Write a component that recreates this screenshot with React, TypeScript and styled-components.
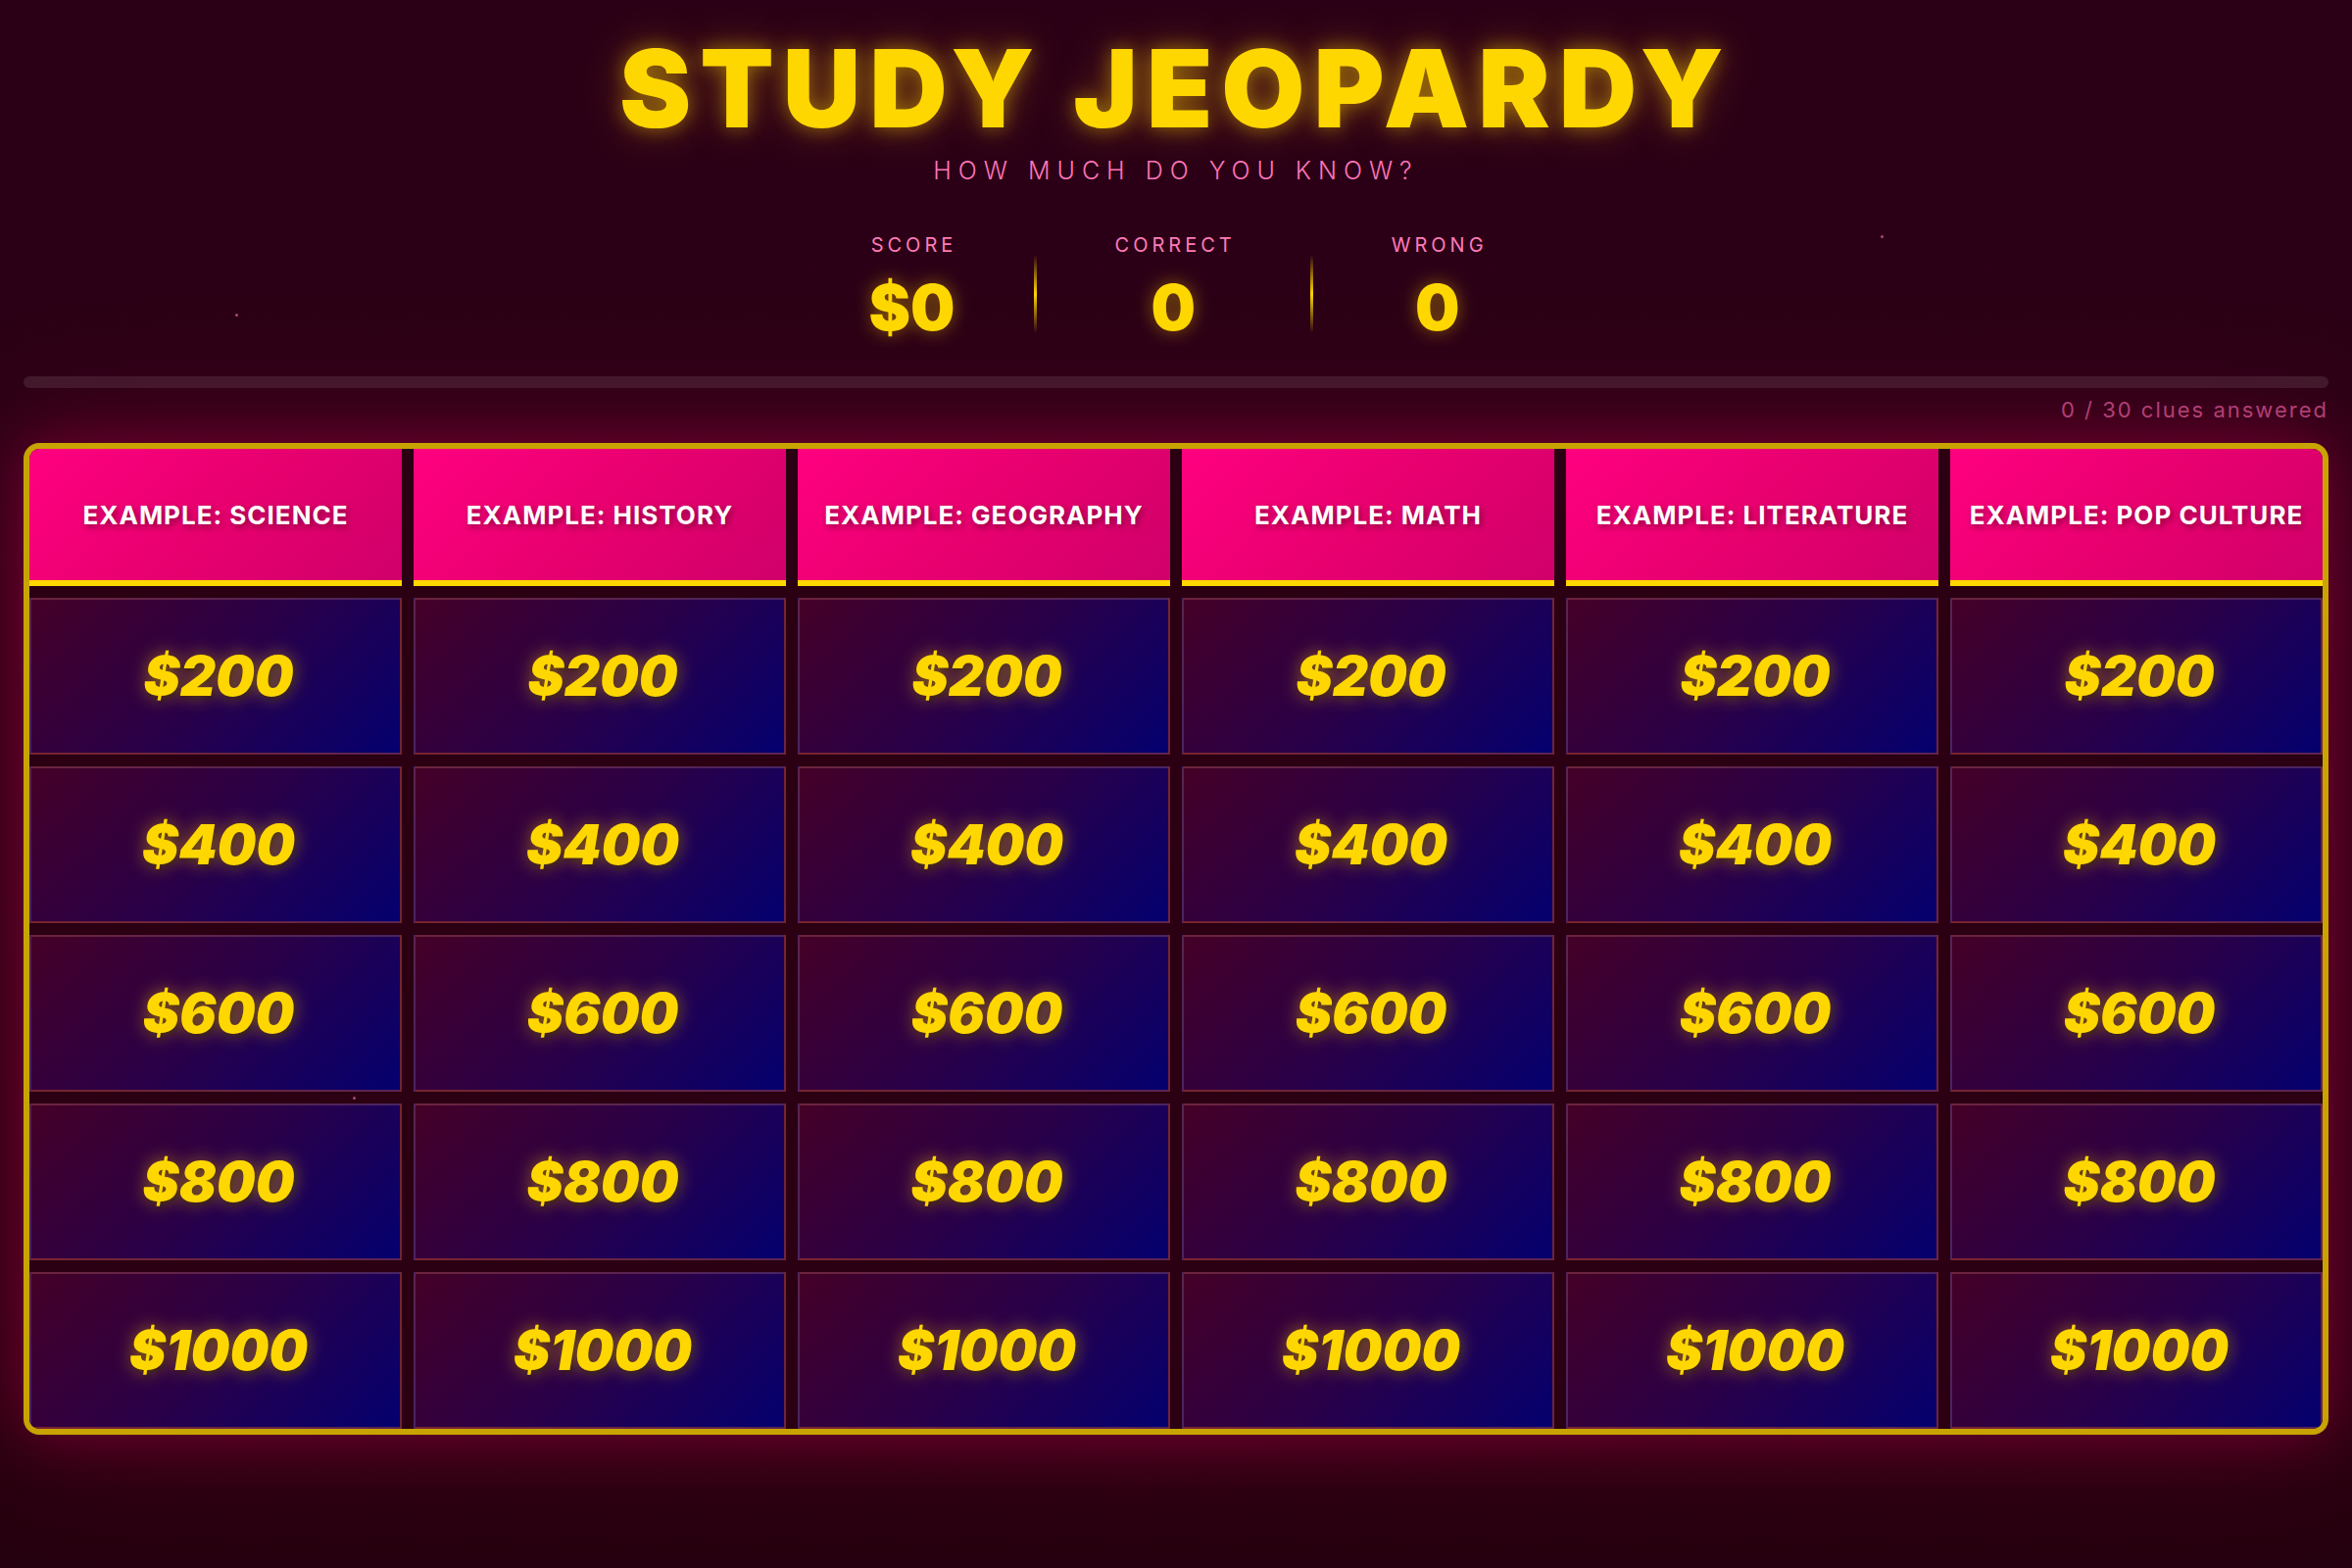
import styled, { createGlobalStyle } from 'styled-components';

const categories = [
  'Example: Science',
  'Example: History',
  'Example: Geography',
  'Example: Math',
  'Example: Literature',
  'Example: Pop Culture',
];

const values = [200, 400, 600, 800, 1000];

const sparks = [
  { x: 240, y: 320 },
  { x: 1919, y: 240 },
  { x: 360, y: 1119 },
];

const GlobalStyle = createGlobalStyle`
  * {
    box-sizing: border-box;
  }
  body {
    margin: 0;
    background: #2a0014;
    font-family: Inter, "Noto Sans", "Liberation Sans", sans-serif;
  }
`;

export default function App() {
  const answered = 0;
  const total = categories.length * values.length;

  return (
    <>
      <GlobalStyle />
      <Page>
        {sparks.map((s, i) => (
          <Spark key={i} style={{ left: s.x, top: s.y }} />
        ))}
        <Title>Study Jeopardy</Title>
        <Subtitle>How much do you know?</Subtitle>

        <Stats>
          <Stat>
            <StatLabel>Score</StatLabel>
            <StatValue>$0</StatValue>
          </Stat>
          <Divider />
          <Stat>
            <StatLabel>Correct</StatLabel>
            <StatValue>0</StatValue>
          </Stat>
          <Divider />
          <Stat>
            <StatLabel>Wrong</StatLabel>
            <StatValue>0</StatValue>
          </Stat>
        </Stats>

        <ProgressTrack>
          <ProgressFill style={{ width: `${(answered / total) * 100}%` }} />
        </ProgressTrack>
        <ProgressText>
          {answered} / {total} clues answered
        </ProgressText>

        <Board>
          {categories.map((c) => (
            <CategoryHeader key={c}>{c}</CategoryHeader>
          ))}
          {values.map((v) =>
            categories.map((c) => (
              <ClueCell key={c + v} type="button">
                ${v}
              </ClueCell>
            ))
          )}
        </Board>
      </Page>
    </>
  );
}

const Page = styled.div`
  position: relative;
  min-height: 100vh;
  padding: 35px 24px 60px;
  background:
    radial-gradient(ellipse 60% 45% at 50% 62%, rgba(120, 0, 45, 0.55), rgba(42, 0, 20, 0) 75%),
    linear-gradient(180deg, #2b0016 0%, #2c0016 40%, #26000f 100%);
`;

const Spark = styled.span`
  position: absolute;
  width: 3px;
  height: 3px;
  border-radius: 50%;
  background: rgba(255, 120, 190, 0.6);
`;

const Title = styled.h1`
  margin: 0;
  text-align: center;
  font-size: 110px;
  line-height: 1;
  font-weight: 900;
  letter-spacing: 9px;
  text-transform: uppercase;
  color: #ffd700;
  text-shadow:
    0 0 20px rgba(255, 215, 0, 0.45),
    0 0 45px rgba(255, 170, 0, 0.3);
`;

const Subtitle = styled.p`
  margin: 17px 0 0;
  text-align: center;
  font-size: 25px;
  line-height: 1;
  font-weight: 300;
  letter-spacing: 7px;
  text-transform: uppercase;
  color: #ff74b8;
`;

const Stats = styled.div`
  display: flex;
  justify-content: center;
  align-items: flex-start;
  gap: 80px;
  margin-top: 53px;
`;

const Stat = styled.div`
  display: flex;
  flex-direction: column;
  align-items: center;
  gap: 22px;
`;

const StatLabel = styled.span`
  font-size: 20px;
  line-height: 1;
  font-weight: 400;
  letter-spacing: 4px;
  margin-right: -4px;
  text-transform: uppercase;
  color: #ff7ab9;
`;

const StatValue = styled.span`
  font-size: 64px;
  line-height: 1;
  font-weight: 900;
  color: #ffd700;
  text-shadow: 0 0 18px rgba(255, 200, 0, 0.45);
`;

const Divider = styled.div`
  width: 3px;
  height: 80px;
  margin-top: 20px;
  background: linear-gradient(180deg, rgba(255, 215, 0, 0) 0%, #ffd700 50%, rgba(255, 215, 0, 0) 100%);
`;

const ProgressTrack = styled.div`
  margin-top: 38px;
  height: 12px;
  border-radius: 6px;
  background: rgba(255, 255, 255, 0.1);
  overflow: hidden;
`;

const ProgressFill = styled.div`
  height: 100%;
  background: linear-gradient(90deg, #ff0080, #ffd700);
`;

const ProgressText = styled.div`
  margin-top: 11px;
  text-align: right;
  font-size: 22px;
  line-height: 1;
  letter-spacing: 2px;
  color: rgba(255, 105, 180, 0.62);
`;

const Board = styled.div`
  margin-top: 23px;
  display: grid;
  grid-template-columns: repeat(6, 1fr);
  gap: 12px;
  border: 6px solid #c9a400;
  border-radius: 16px;
  overflow: hidden;
  background: #2a0012;
  box-shadow:
    0 0 60px rgba(220, 0, 90, 0.35),
    0 0 140px rgba(160, 0, 60, 0.3);
`;

const CategoryHeader = styled.div`
  height: 140px;
  display: flex;
  align-items: center;
  justify-content: center;
  padding: 0 6px;
  text-align: center;
  white-space: nowrap;
  background: linear-gradient(135deg, #ff0080 0%, #e8006f 50%, #d0006a 100%);
  border-bottom: 6px solid #ffd700;
  font-size: 26px;
  font-weight: 700;
  letter-spacing: 1px;
  text-transform: uppercase;
  color: #ffffff;
  text-shadow: 2px 3px 6px rgba(80, 0, 30, 0.6);
`;

const ClueCell = styled.button`
  height: 160px;
  display: flex;
  align-items: center;
  justify-content: center;
  padding: 0 0 0 6px;
  cursor: pointer;
  font-family: inherit;
  border: 2px solid rgba(255, 130, 70, 0.28);
  background: linear-gradient(135deg, #440027 0%, #2a0048 50%, #04006f 100%);
  font-size: 56px;
  font-weight: 900;
  font-style: italic;
  color: #ffd700;
  text-shadow:
    0 0 18px rgba(255, 200, 0, 0.5),
    2px 3px 4px rgba(0, 0, 0, 0.45);
`;
